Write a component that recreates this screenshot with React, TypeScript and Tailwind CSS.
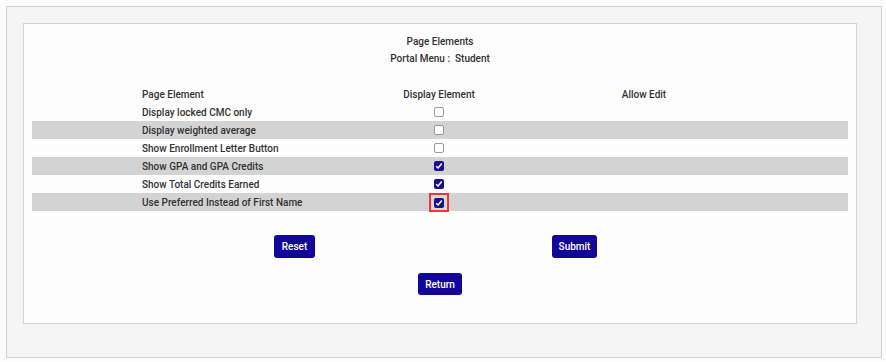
import React from "react";

const rows: { label: string; checked: boolean; highlight?: boolean }[] = [
  { label: "Display locked CMC only", checked: false },
  { label: "Display weighted average", checked: false },
  { label: "Show Enrollment Letter Button", checked: false },
  { label: "Show GPA and GPA Credits", checked: true },
  { label: "Show Total Credits Earned", checked: true },
  { label: "Use Preferred Instead of First Name", checked: true, highlight: true },
];

function Box({ checked }: { checked: boolean }) {
  if (!checked) {
    return <span className="block w-[10px] h-[10px] rounded-[2px] border border-[#9a9a9a] bg-white" />;
  }
  return (
    <span className="flex items-center justify-center w-[10px] h-[10px] rounded-[2px] bg-[#1a0f8f]">
      <svg width="8" height="8" viewBox="0 0 8 8">
        <path d="M1.2 4.2 L3.1 6 L6.8 1.6" stroke="white" strokeWidth="1.5" fill="none" />
      </svg>
    </span>
  );
}

export default function App() {
  return (
    <div
      className="w-[886px] h-[362px] bg-[#fcfcfc] pt-[6px] pl-[6px] text-[10px] text-[#333] font-medium"
      style={{ fontFamily: 'Roboto, "Liberation Sans", Arial, sans-serif' }}
    >
      <div className="w-[876px] h-[352px] border border-[#d0d0d0] bg-[#f5f5f5] pt-[16px] pl-[16px]">
        <div className="w-[834px] h-[301px] border border-[#d3d3d3] bg-[#fdfdfd] px-[8px] pt-[9px]">
          <div className="text-center leading-[17px]">Page Elements</div>
          <div className="text-center leading-[17px]">Portal Menu :&nbsp; Student</div>
          <div className="mt-[18px]">
            <div className="grid grid-cols-[110px_238px_118px_292px_1fr] h-[18px] items-center">
              <div />
              <div>Page Element</div>
              <div className="text-center">Display Element</div>
              <div className="text-center">Allow Edit</div>
              <div />
            </div>
            {rows.map((r, i) => (
              <div
                key={r.label}
                className={`grid grid-cols-[110px_238px_118px_292px_1fr] h-[18px] items-center ${
                  i % 2 === 1 ? "bg-[#d3d3d3]" : ""
                }`}
              >
                <div />
                <div>{r.label}</div>
                <div className="flex justify-center">
                  {r.highlight ? (
                    <span className="flex items-center justify-center w-[20px] h-[19px] border-2 border-[#f0353a] bg-[#d8d8d8] ml-[-1px]">
                      <Box checked={r.checked} />
                    </span>
                  ) : (
                    <span className="ml-[-1px]">
                      <Box checked={r.checked} />
                    </span>
                  )}
                </div>
                <div />
                <div />
              </div>
            ))}
          </div>
          <div className="flex mt-[24px]">
            <button className="ml-[242px] h-[23px] w-[41px] rounded-[3px] bg-[#12069a] text-white text-[10px] font-medium">
              Reset
            </button>
            <button className="ml-[237px] h-[23px] w-[45px] rounded-[3px] bg-[#12069a] text-white text-[10px] font-medium">
              Submit
            </button>
          </div>
          <div className="flex justify-center mt-[15px]">
            <button className="h-[22px] w-[44px] rounded-[3px] bg-[#12069a] text-white text-[10px] font-medium">
              Return
            </button>
          </div>
        </div>
      </div>
    </div>
  );
}
